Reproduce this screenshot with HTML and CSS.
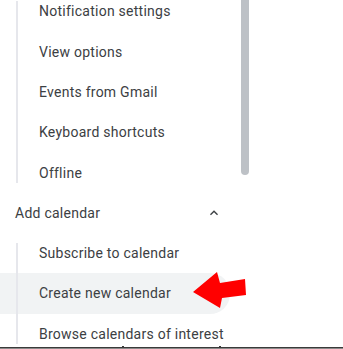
FILE: index.html
```html
<!DOCTYPE html>
<html>
<head>
<meta charset="utf-8">
<link rel="stylesheet" href="styles.css">
</head>
<body>
<div class="page">
  <div class="settings">
    <div class="sub settings-list">
      <div class="item">Notification settings</div>
      <div class="item">View options</div>
      <div class="item">Events from Gmail</div>
      <div class="item">Keyboard shortcuts</div>
      <div class="item">Offline</div>
    </div>
    <div class="track"><div class="thumb"></div></div>
  </div>
  <div class="group-head">
    <span class="group-title">Add calendar</span>
    <svg class="chevron" width="16" height="16" viewBox="0 0 24 24"><path d="M12 8l-6 6 1.41 1.41L12 10.83l4.59 4.58L18 14z" fill="#3c4043"/></svg>
  </div>
  <div class="sub add-list">
    <div class="item">Subscribe to calendar</div>
    <div class="item active">Create new calendar
      <svg class="arrow" width="60" height="44" viewBox="190 270 60 44"><polygon points="193,293 217,273 220,284 245,280 246,296 222,299 220,309" fill="#ff0000"/></svg>
    </div>
    <div class="item">Browse calendars of interest</div>
  </div>
</div>
<div class="edge"><span class="tick t1"></span><span class="tick t2"></span></div>
</body>
</html>
```
FILE: styles.css
```css
html, body {
  margin: 0;
  padding: 0;
  background: #ffffff;
  overflow: hidden;
  width: 343px;
  height: 349px;
}
body {
  font-family: Roboto, "Liberation Sans", Arial, sans-serif;
  font-size: 14px;
  color: #3c4043;
  position: relative;
}
.page {
  margin-top: -8.8px;
}
.settings {
  display: flex;
  align-items: flex-start;
}
.settings-list {
  width: 241px;
}
.track {
  width: 8px;
}
.thumb {
  height: 183.8px;
  background: #bdc1c6;
  border-radius: 0 0 4px 4px;
}
.sub {
  position: relative;
}
.sub::before {
  content: "";
  position: absolute;
  left: 16px;
  top: 10px;
  bottom: 10px;
  width: 2px;
  background: #e6e7ec;
  z-index: 1;
}
.item {
  height: 40.3px;
  display: flex;
  align-items: center;
  padding-left: 39px;
  letter-spacing: 0.25px;
  white-space: nowrap;
}
.item.active {
  background: #f1f3f4;
  width: 191px;
  border-radius: 0 20px 20px 0;
  position: relative;
}
.arrow {
  position: absolute;
  left: 190px;
  top: -4px;
}
.group-head {
  height: 40.3px;
  display: flex;
  align-items: center;
  padding-left: 15px;
  width: 207px;
  justify-content: space-between;
}
.group-title {
  letter-spacing: 0.25px;
}
.chevron {
  display: block;
}
.edge {
  position: absolute;
  left: 0;
  right: 0;
  top: 347px;
  height: 2px;
  background: linear-gradient(#3a3a3a 0 1px, #8a8a8a 1px 2px);
}
.tick {
  position: absolute;
  top: -1px;
  width: 2px;
  height: 1px;
  background: #3a3a3a;
}
.t1 { left: 122px; }
.t2 { left: 219px; }
```
